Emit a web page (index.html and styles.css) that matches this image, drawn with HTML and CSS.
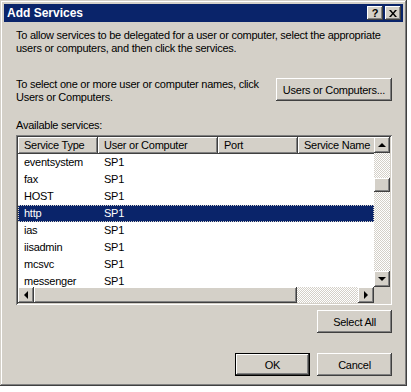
FILE: index.html
```html
<!DOCTYPE html>
<html lang="en">

<head>
	<meta charset="UTF-8">
	<meta name="viewport" content="width=device-width, initial-scale=1.0">
	<title>Add Services</title>

	<link rel="stylesheet" href="styles.css">
</head>

<body>
	<div class="window">
		<div class="titlebar">
			<span class="title">Add Services</span>
			<div class="tbtns">
				<button class="tbtn">?</button>
				<button class="tbtn">
					<svg width="8" height="7" viewBox="0 0 8 7"><path d="M0 0h2l2 2.5L6 0h2L5 3.5 8 7H6L4 4.5 2 7H0l3-3.5z" fill="#000"/></svg>
				</button>
			</div>
		</div>

		<div class="content">
			<p class="intro">To allow services to be delegated for a user or computer, select the appropriate<br>users or computers, and then click the services.</p>

			<div class="pick">
				<p>To select one or more user or computer names, click<br>Users or Computers.</p>
				<button class="btn btn-users">Users or Computers...</button>
			</div>

			<div class="label">Available services:</div>

			<div class="list">
				<div class="view">
					<div class="head">
						<div class="hcell c1">Service Type</div>
						<div class="hcell c2">User or Computer</div>
						<div class="hcell c3">Port</div>
						<div class="hcell c4">Service Name</div>
					</div>
					<div class="rows">
						<div class="row"><span class="c1">eventsystem</span><span class="c2">SP1</span></div>
						<div class="row"><span class="c1">fax</span><span class="c2">SP1</span></div>
						<div class="row"><span class="c1">HOST</span><span class="c2">SP1</span></div>
						<div class="row sel"><span class="c1">http</span><span class="c2">SP1</span></div>
						<div class="row"><span class="c1">ias</span><span class="c2">SP1</span></div>
						<div class="row"><span class="c1">iisadmin</span><span class="c2">SP1</span></div>
						<div class="row"><span class="c1">mcsvc</span><span class="c2">SP1</span></div>
						<div class="row"><span class="c1">messenger</span><span class="c2">SP1</span></div>
					</div>
				</div>

				<div class="vscroll">
					<div class="sbtn"><span class="arr up"></span></div>
					<div class="track vtrack">
						<div class="vthumb"></div>
					</div>
					<div class="sbtn"><span class="arr down"></span></div>
				</div>

				<div class="hscroll">
					<div class="sbtn"><span class="arr left"></span></div>
					<div class="hthumb"></div>
					<div class="track htrack"></div>
					<div class="sbtn"><span class="arr right"></span></div>
				</div>

				<div class="corner"></div>
			</div>

			<div class="actions">
				<button class="btn">Select All</button>
			</div>

			<div class="actions bottom">
				<button class="btn default">OK</button>
				<button class="btn">Cancel</button>
			</div>
		</div>
	</div>
</body>

</html>
```

FILE: styles.css
```css
* {
	margin: 0;
	padding: 0;
	box-sizing: border-box;
}

body {
	background: #fff;
	font-family: "Liberation Sans", Arial, sans-serif;
	font-size: 11px;
	letter-spacing: -0.25px;
	color: #000;
}

.window {
	width: 407px;
	height: 386px;
	background: #d4d0c8;
	padding: 4px;
	box-shadow: inset -1px -1px #404040, inset 1px 1px #d4d0c8,
		inset -2px -2px #808080, inset 2px 2px #fff;
}

.titlebar {
	height: 18px;
	background: #0a246a;
	display: flex;
	align-items: center;
	justify-content: space-between;
	padding: 0 2px 0 3px;
}

.title {
	color: #fff;
	font-weight: bold;
	font-size: 12px;
	letter-spacing: 0;
}

.tbtns {
	display: flex;
	gap: 2px;
}

.tbtn {
	width: 16px;
	height: 14px;
	background: #d4d0c8;
	border: 0;
	font-family: "Liberation Sans", Arial, sans-serif;
	font-weight: bold;
	font-size: 11px;
	line-height: 14px;
	display: flex;
	align-items: center;
	justify-content: center;
	box-shadow: inset -1px -1px #404040, inset 1px 1px #fff,
		inset -2px -2px #808080;
}

.content {
	padding: 7px 11px 0 12px;
	line-height: 13px;
	white-space: nowrap;
}

.pick {
	display: flex;
	justify-content: space-between;
	align-items: flex-start;
	margin-top: 23px;
}

.btn {
	background: #d4d0c8;
	border: 0;
	height: 23px;
	width: 75px;
	font-family: "Liberation Sans", Arial, sans-serif;
	font-size: 11px;
	letter-spacing: -0.25px;
	color: #000;
	box-shadow: inset -1px -1px #404040, inset 1px 1px #fff,
		inset -2px -2px #808080, inset 2px 2px #d4d0c8;
}

.btn-users {
	width: 116px;
}

.btn.default {
	border: 1px solid #000;
	box-shadow: inset -1px -1px #404040, inset 1px 1px #fff,
		inset -2px -2px #808080;
}

.label {
	margin-top: 15px;
}

.list {
	margin-top: 3px;
	width: 376px;
	height: 170px;
	background: #fff;
	padding: 2px;
	display: grid;
	grid-template-columns: 1fr 16px;
	grid-template-rows: 1fr 16px;
	box-shadow: inset 1px 1px #808080, inset -1px -1px #fff,
		inset 2px 2px #404040, inset -2px -2px #d4d0c8;
}

.view {
	overflow: hidden;
}

.head {
	display: flex;
	height: 17px;
}

.hcell {
	flex: none;
	background: #d4d0c8;
	padding: 2px 0 0 6px;
	box-shadow: inset -1px -1px #404040, inset 1px 1px #fff,
		inset -2px -2px #808080;
}

.c1 { width: 80px; }
.c2 { width: 120px; }
.c3 { width: 80px; }
.c4 { width: 90px; }

.row {
	display: flex;
	height: 17px;
	align-items: center;
}

.row span {
	padding-left: 6px;
	flex: none;
}

.row.sel {
	background: #0a246a;
	color: #fff;
	outline: 1px dotted #d4d0c8;
	outline-offset: -1px;
}

.vscroll {
	display: flex;
	flex-direction: column;
}

.hscroll {
	display: flex;
}

.track {
	flex: 1;
	background: repeating-conic-gradient(#d4d0c8 0 25%, #fff 0 50%) 0 0 / 2px 2px;
}

.vtrack {
	padding-top: 25px;
}

.vthumb {
	height: 14px;
	background: #d4d0c8;
	box-shadow: inset -1px -1px #404040, inset 1px 1px #fff,
		inset -2px -2px #808080;
}

.hthumb {
	width: 263px;
	background: #d4d0c8;
	box-shadow: inset -1px -1px #404040, inset 1px 1px #fff,
		inset -2px -2px #808080;
}

.sbtn {
	width: 16px;
	height: 16px;
	flex: none;
	background: #d4d0c8;
	display: flex;
	align-items: center;
	justify-content: center;
	box-shadow: inset -1px -1px #404040, inset 1px 1px #fff,
		inset -2px -2px #808080;
}

.arr {
	width: 0;
	height: 0;
	border: 4px solid transparent;
}

.arr.up {
	border-bottom-color: #000;
	border-top-width: 0;
	margin-top: -1px;
}

.arr.down {
	border-top-color: #000;
	border-bottom-width: 0;
}

.arr.left {
	border-right-color: #000;
	border-left-width: 0;
}

.arr.right {
	border-left-color: #000;
	border-right-width: 0;
}

.corner {
	background: #d4d0c8;
}

.actions {
	display: flex;
	justify-content: flex-end;
	gap: 7px;
	margin-top: 5px;
}

.actions.bottom {
	margin-top: 20px;
}
```
